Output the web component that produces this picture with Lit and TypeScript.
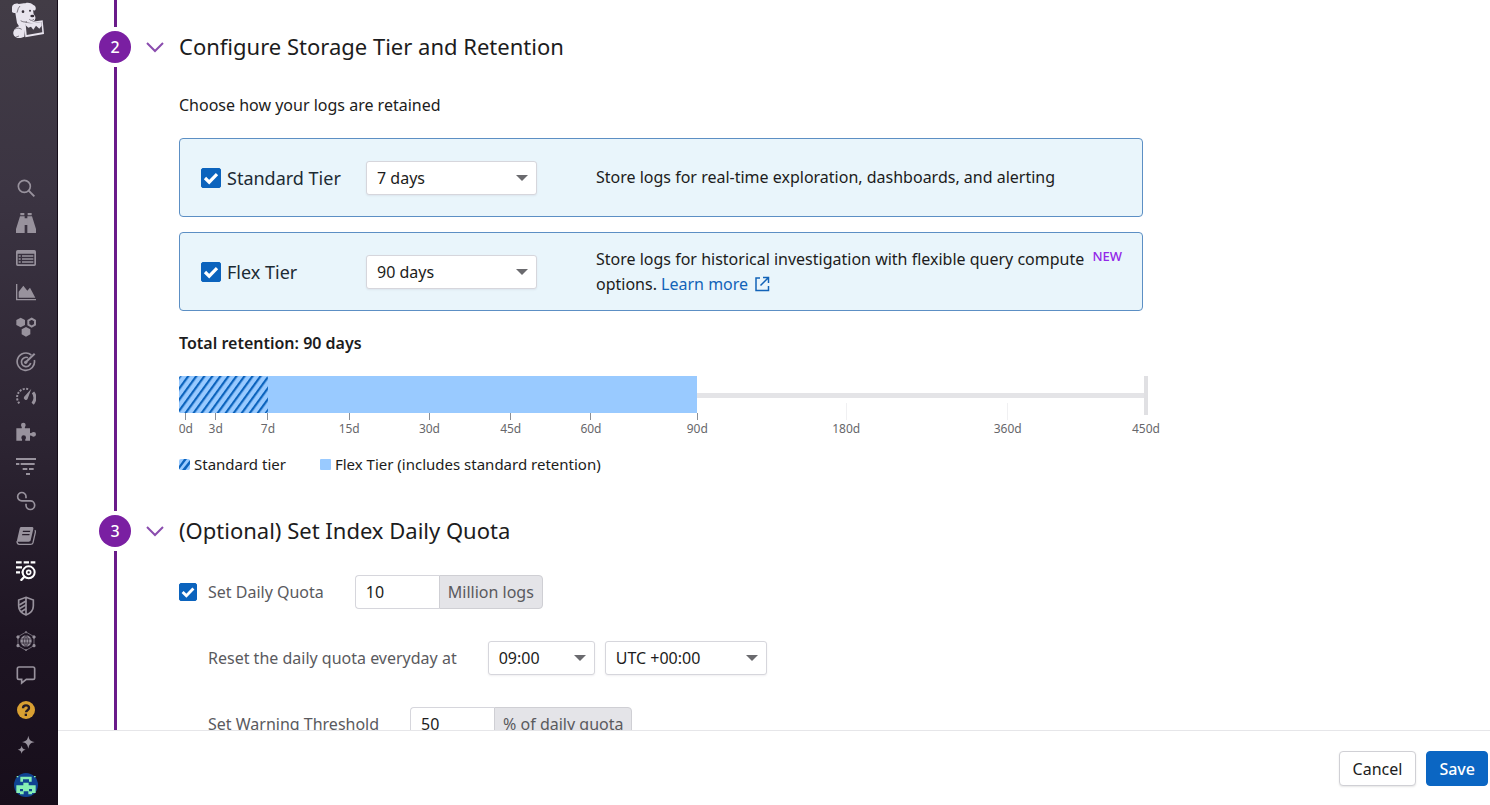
import { LitElement, html, svg, css, TemplateResult, SVGTemplateResult } from "lit";
import { customElement, property } from "lit/decorators.js";

interface NavEntry {
  name: string;
  art: SVGTemplateResult;
  tone?: string;
}

const NAV: NavEntry[] = [
  {
    name: "Search",
    art: svg`<circle cx="25" cy="25" r="18" fill="none" stroke="currentColor" stroke-width="5"/><path d="M38 38 55 55" stroke="currentColor" stroke-width="6"/>`,
  },
  {
    name: "Watchdog",
    art: svg`<path d="M13 0h12v7H13zM35 0h12v7H35zM12 10h14v50H0V48zM34 10h14l12 38v12H34zM26 16h8v20h-8z" fill="currentColor"/>`,
  },
  {
    name: "Events",
    art: svg`<path fill-rule="evenodd" d="M5 6h50a5 5 0 0 1 5 5v38a5 5 0 0 1-5 5H5a5 5 0 0 1-5-5V11a5 5 0 0 1 5-5zM5 17v32h50V17z" fill="currentColor"/><path d="M8 24h6M18 24h34M8 33h6M18 33h34M8 42h6M18 42h34" stroke="currentColor" stroke-width="4"/>`,
  },
  {
    name: "Dashboards",
    art: svg`<path d="M2 6v47h58" fill="none" stroke="currentColor" stroke-width="4"/><path d="M8 47V29l14-18 12 15 8-9 16 30z" fill="currentColor"/>`,
  },
  {
    name: "Infrastructure",
    art: svg`<path d="m14 2 13 7v15l-13 7-13-7V9zM30 30l13 7v15l-13 7-13-7V37z" fill="currentColor"/><path d="m47 5 10 6v12l-10 6-10-6V11z" fill="none" stroke="currentColor" stroke-width="6"/>`,
  },
  {
    name: "Monitors",
    art: svg`<path d="M46 9A26 26 0 1 0 55 24" fill="none" stroke="currentColor" stroke-width="5"/><path d="M36 17A14 14 0 1 0 44 33" fill="none" stroke="currentColor" stroke-width="5"/><path d="M29 31 56 5" stroke="currentColor" stroke-width="6"/><circle cx="29" cy="31" r="5" fill="currentColor"/>`,
  },
  {
    name: "Service level",
    art: svg`<path d="M10 49A26 26 0 0 1 38 7" fill="none" stroke="currentColor" stroke-width="6" stroke-dasharray="6 4"/><path d="M51 16a26 26 0 0 1-1 34" fill="none" stroke="currentColor" stroke-width="9"/><path d="m46 5-11 30a6 6 0 0 1-11-5z" fill="currentColor"/>`,
  },
  {
    name: "Integrations",
    art: svg`<path d="M1 19h16c2-4-2-5-2-10a7 7 0 0 1 14 0c0 5-4 6-2 10h15v14c5 2 5-3 11-3a7 7 0 0 1 0 14c-6 0-6-5-11-3v15H28c-2-5 2-5 2-9a7 7 0 0 0-14 0c0 4 4 4 2 9H1z" fill="currentColor"/>`,
  },
  {
    name: "APM",
    art: svg`<path d="M0 6h60M0 21h10M14 21h42M20 36h14M39 36h14M30 51h12" stroke="currentColor" stroke-width="6"/>`,
  },
  {
    name: "CI",
    art: svg`<path d="M30 22v-5A12.500 12.500 0 1 0 17.500 29.500H43A13 13 0 1 1 30 43v-5" fill="none" stroke="currentColor" stroke-width="5"/>`,
  },
  {
    name: "Notebooks",
    art: svg`<path fill-rule="evenodd" d="M17 3h30c4 0 6 2 5 6l-8 34c-1 3-3 4-6 4H2L11 8c1-4 3-5 6-5zM21 14l-1 4h22l1-4zM19 24l-1 4h22l1-4z" fill="currentColor"/><path d="M3 46c0 7 2 9 7 9h34c4 0 6-2 7-5l7-31c1-3 0-5-2-6" fill="none" stroke="currentColor" stroke-width="4"/>`,
  },
  {
    name: "Logs",
    tone: "current",
    art: svg`<path d="M0 4h17M23 4h16M44 4h14M0 19h18M0 34h12M17 34h4" stroke="currentColor" stroke-width="7"/><circle cx="38" cy="34" r="18" fill="none" stroke="currentColor" stroke-width="6"/><circle cx="38" cy="34" r="6" fill="none" stroke="currentColor" stroke-width="5"/><path d="M25 47 14 59" stroke="currentColor" stroke-width="7"/>`,
  },
  {
    name: "Security",
    art: svg`<path d="M30 4 52 12v18c0 13-9 22-22 27C17 52 8 43 8 30V12zM30 4v53" fill="none" stroke="currentColor" stroke-width="5"/><path d="m10 27 20-12M10 38l20-12M15 47l15-9" stroke="currentColor" stroke-width="5"/>`,
  },
  {
    name: "Synthetics",
    art: svg`<circle cx="30" cy="30" r="17" fill="currentColor"/><path d="M14 24h32M14 36h32M30 13v34M30 13c-11 10-11 24 0 34M30 13c11 10 11 24 0 34" stroke="#221a27" stroke-width="2" fill="none"/><path d="m30 3 24 14v27L30 58 6 44V17z" fill="none" stroke="currentColor" stroke-width="2"/><path d="M30 0v7M30 54v7M3 15h6v6H3zM51 15h6v6h-6zM3 41h6v6H3zM51 41h6v6h-6z" stroke="currentColor" stroke-width="3" fill="currentColor"/>`,
  },
  {
    name: "Feedback",
    art: svg`<path d="M9 6h42a5 5 0 0 1 5 5v27a5 5 0 0 1-5 5H31L17 54V43H9a5 5 0 0 1-5-5V11a5 5 0 0 1 5-5z" fill="none" stroke="currentColor" stroke-width="5"/>`,
  },
  {
    name: "Help",
    tone: "help",
    art: svg`<circle cx="30" cy="30" r="27" fill="currentColor"/><path d="M21 25c0-12 18-11 18-1 0 7-9 6-9 13" fill="none" stroke="#231a25" stroke-width="7"/><path d="M26 41h7v7h-7z" fill="#231a25"/>`,
  },
  {
    name: "AI",
    art: svg`<path d="M37 2c3 13 6 16 19 19-13 3-16 6-19 20-3-14-6-17-19-20 13-3 16-6 19-19zM17 32c2 8 4 10 12 12-8 2-10 4-12 12-2-8-4-10-12-12 8-2 10-4 12-12z" fill="currentColor"/>`,
  },
];

@customElement("side-nav")
export class SideNav extends LitElement {
  static styles = css`
    :host {
      display: flex;
      flex-direction: column;
      box-sizing: border-box;
      flex: none;
      width: 58px;
      padding: 2px 0 8px 12px;
      background: linear-gradient(#423c46 0%, #3b3442 24%, #2c2432 55%, #1d1422 80%, #170e1b 100%);
      border-right: 1px solid #150d19;
    }
    .logo {
      width: 34px;
      height: 38px;
      color: #e8e4ee;
    }
    .logo svg,
    .item svg,
    .avatar svg {
      display: block;
      width: 100%;
      height: 100%;
    }
    .items {
      flex: 1;
      display: flex;
      flex-direction: column;
      justify-content: space-between;
      margin: 138px 0 18px 4px;
    }
    .item {
      width: 20px;
      height: 20px;
      color: #98929d;
    }
    .current {
      color: #fff;
    }
    .help {
      color: #d9a032;
    }
    .avatar {
      width: 24px;
      height: 24px;
      margin-left: 2px;
    }
  `;

  render() {
    return html`
      <a class="logo" href="#" aria-label="Home">
        <svg viewBox="36 6 102 114">
          <path
            fill="currentColor"
            d="M37 17c5-6 13-8 19-5 8 0 14-2 20-2 8-3 17-1 24 5 7 3 9 9 6 15-3 3-5 2-7-1l2 14c4 4 6 8 5 13-2 8-9 10-16 10l-13 1-4 43c-8 3-15 6-23 3-11-5-13-15-7-24 3-5 9-9 14-10l-6-10-5-30c-7 1-11-2-12-8z"
          />
          <path fill="currentColor" d="m72 69 56-8 4 41-56 10z" />
          <path fill="#453f49" d="m77 73 47-7 3 31-47 8z" />
          <path fill="currentColor" d="m77 76 8 7 8-3 7 9 8-12 10 9 7-9-1-11-47 6z" />
          <path d="m51 38 4-13 5-7M62 62c6 4 13 5 19 3M45 87c6-4 14-3 20 1M46 112l11-4M88 58c4 4 9 4 14 0" fill="none" stroke="#453f49" stroke-width="2" />
          <circle cx="69" cy="35" r="4" fill="#352f39" />
          <circle cx="90" cy="32" r="3" fill="#352f39" />
          <ellipse cx="97" cy="48" rx="6" ry="4" fill="#352f39" />
        </svg>
      </a>
      <nav class="items" aria-label="Main">
        ${NAV.map(
          (n) => html`<a class="item ${n.tone ?? ""}" href="#" aria-label=${n.name}><svg viewBox="0 0 60 60">${n.art}</svg></a>`
        )}
      </nav>
      <a class="avatar" href="#" aria-label="Account">
        <svg viewBox="0 0 72 72">
          <circle cx="36" cy="36" r="36" fill="#0f4391" />
          <path
            fill="#86efb4"
            d="M19 11h34v15h-8v-7H27v7h-8zM28 29h16v8h21v23H54V48h-9v7H27v-7h-9v12H7V37h21zM18 55h11v9H18zM43 55h11v9H43z"
          />
          <path fill="#86efb4" d="M8 9h5v4H8zM60 9h5v4h-5z" />
        </svg>
      </a>
    `;
  }
}

@customElement("check-box")
export class CheckBox extends LitElement {
  @property() label = "";
  @property() size: "large" | "small" = "small";

  static styles = css`
    :host {
      display: block;
    }
    .label {
      display: flex;
      align-items: center;
      line-height: 24px;
    }
    .small {
      gap: 11px;
      font-size: 16px;
      color: #5a5a5e;
    }
    .large {
      gap: 6px;
      font-size: 18px;
      color: #1c2b34;
    }
    .box {
      display: grid;
      flex: none;
      width: 18px;
      height: 18px;
    }
    .large .box {
      width: 20px;
      height: 20px;
    }
    .box > * {
      grid-area: 1 / 1;
    }
    .input {
      appearance: none;
      margin: 0;
      border-radius: 2px;
      background: #fff;
      border: 1px solid #b9b9bd;
    }
    .input:checked {
      background: #0b63bd;
      border-color: #0b63bd;
    }
    .mark {
      width: 100%;
      height: 100%;
      pointer-events: none;
    }
  `;

  render() {
    return html`
      <label class="label ${this.size}">
        <span class="box">
          <input class="input" type="checkbox" checked />
          <svg class="mark" viewBox="0 0 20 20"><path d="m4 10 4.200 4.200L16 6.200" fill="none" stroke="#fff" stroke-width="3.200" /></svg>
        </span>
        <span>${this.label}</span>
      </label>
    `;
  }
}

@customElement("drop-down")
export class DropDown extends LitElement {
  @property() value = "";
  @property() name = "";

  static styles = css`
    :host {
      display: grid;
      align-items: center;
      height: 34px;
    }
    .select,
    .arrow {
      grid-area: 1 / 1;
    }
    .select {
      appearance: none;
      box-sizing: border-box;
      width: 100%;
      height: 100%;
      margin: 0;
      padding: 0 28px 0 10px;
      border: 1px solid #d6d6dc;
      border-radius: 3px;
      background: #fff;
      box-shadow: 0 1px 2px rgba(60, 50, 80, 0.08);
      font: inherit;
      font-size: 16px;
      color: #1c1c20;
    }
    .arrow {
      justify-self: end;
      width: 12px;
      height: 6px;
      margin-right: 9px;
      pointer-events: none;
    }
  `;

  render() {
    return html`
      <select class="select" aria-label=${this.name}>
        <option>${this.value}</option>
      </select>
      <svg class="arrow" viewBox="0 0 12 6"><path d="M0 0h12L6 6z" fill="#6a6a6e" /></svg>
    `;
  }
}

interface Tick {
  label: string;
  at: number;
  kind?: "faint" | "edge";
}

/* Positions are percentages along the retention axis. */
const TICKS: Tick[] = [
  { label: "0d", at: 0.7 },
  { label: "3d", at: 3.8 },
  { label: "7d", at: 9.2 },
  { label: "15d", at: 17.6 },
  { label: "30d", at: 25.9 },
  { label: "45d", at: 34.3 },
  { label: "60d", at: 42.6 },
  { label: "90d", at: 53.6 },
  { label: "180d", at: 69, kind: "faint" },
  { label: "360d", at: 85.7, kind: "faint" },
  { label: "450d", at: 100, kind: "edge" },
];

@customElement("retention-chart")
export class RetentionChart extends LitElement {
  static styles = css`
    :host {
      display: block;
    }
    .chart {
      display: block;
      width: 100%;
      height: 64px;
      overflow: visible;
    }
    .crisp {
      shape-rendering: crispEdges;
    }
    .tick {
      stroke: #8b8f96;
    }
    .faint {
      stroke: #f0f0f2;
    }
    .text {
      font-size: 12px;
      fill: #67676b;
      text-anchor: middle;
    }
    .legend {
      display: flex;
      gap: 34px;
      margin: 14px 0 0;
      padding: 0;
      list-style: none;
      font-size: 15px;
      line-height: 20px;
      color: #1c1c20;
    }
    .key {
      display: flex;
      align-items: center;
      gap: 4px;
    }
    .swatch {
      width: 11px;
      height: 11px;
    }
  `;

  private tick(t: Tick) {
    if (t.kind === "edge") return svg`<text class="text" x="${t.at}%" y="57">${t.label}</text>`;
    const x = `${t.at}%`;
    return svg`
      <line class="crisp ${t.kind ?? "tick"}" x1=${x} x2=${x} y1=${t.kind ? 27 : 37} y2="44"/>
      <text class="text" x=${x} y="57">${t.label}</text>`;
  }

  render() {
    return html`
      <svg class="chart" role="img" aria-label="Retention by tier">
        <defs>
          <pattern id="stripes" width="6.500" height="10" patternUnits="userSpaceOnUse" patternTransform="rotate(36)">
            <rect width="6.500" height="10" fill="#99caff" />
            <rect width="2.200" height="10" fill="#0b63bd" />
          </pattern>
        </defs>
        <rect class="crisp" x="53.6%" y="17" width="46.4%" height="5" fill="#e4e4e7" />
        <rect class="crisp" x="99.8%" y="0" width="4" height="39" fill="#e0e0e3" />
        <rect x="0" y="0" width="20%" height="37" rx="3" fill="#99caff" />
        <rect class="crisp" x="9.2%" y="0" width="44.4%" height="37" fill="#99caff" />
        <rect x="0" y="0" width="9.2%" height="37" rx="2" fill="url(#stripes)" />
        ${TICKS.map((t) => this.tick(t))}
      </svg>
      <ul class="legend">
        <li class="key">
          <svg class="swatch" viewBox="0 0 11 11">
            <rect width="11" height="11" rx="2" fill="#99caff" />
            <path d="M0 7 5 0h3L0 10.500zM3 11 11 1v4L6.500 11z" fill="#0b63bd" />
          </svg>
          Standard tier
        </li>
        <li class="key">
          <svg class="swatch" viewBox="0 0 11 11"><rect width="11" height="11" rx="1" fill="#99caff" /></svg>
          Flex Tier (includes standard retention)
        </li>
      </ul>
    `;
  }
}

@customElement("wizard-step")
export class WizardStep extends LitElement {
  @property() number = "";
  @property() heading = "";

  static styles = css`
    :host {
      display: grid;
      grid-template-columns: 32px 18px minmax(0, 1fr);
      column-gap: 15px;
    }
    .rail {
      display: flex;
      flex-direction: column;
      align-items: center;
      gap: 4px;
      padding-bottom: 4px;
    }
    .badge {
      display: grid;
      place-items: center;
      width: 32px;
      height: 32px;
      border-radius: 50%;
      background: #7a1fa2;
      color: #fff;
      font-size: 16px;
      font-weight: 500;
    }
    .line {
      flex: 1;
      width: 3px;
      background: #6a1b8a;
    }
    .toggle {
      display: grid;
      place-items: center;
      height: 32px;
      padding: 0;
      border: 0;
      background: none;
    }
    .chevron {
      width: 18px;
      height: 11px;
    }
    .title {
      margin: 0;
      padding-bottom: 2px;
      font-size: 22px;
      font-weight: 400;
      line-height: 30px;
      color: #1c1c20;
    }
  `;

  render() {
    return html`
      <div class="rail">
        <span class="badge">${this.number}</span>
        <span class="line"></span>
      </div>
      <button class="toggle" type="button" aria-label="Collapse ${this.heading}">
        <svg class="chevron" viewBox="0 0 18 11"><path d="m1 1 8 8 8-8" fill="none" stroke="#8a4cae" stroke-width="2" /></svg>
      </button>
      <div>
        <h2 class="title">${this.heading}</h2>
        <slot></slot>
      </div>
    `;
  }
}

@customElement("app-root")
export class AppRoot extends LitElement {
  static styles = css`
    :host {
      display: flex;
      height: 100vh;
      font-family: "Noto Sans", sans-serif;
      font-size: 16px;
      line-height: 24px;
      color: #1c1c20;
      background: #fff;
    }
    .main {
      flex: 1;
      display: flex;
      flex-direction: column;
      min-width: 0;
    }
    .scroll {
      flex: 1;
      min-height: 0;
      overflow-y: auto;
      scrollbar-width: none;
      padding: 0 41px;
    }
    .lead {
      display: flex;
      justify-content: center;
      width: 32px;
      height: 27px;
      margin-bottom: 4px;
    }
    .lead-line {
      width: 3px;
      background: #6a1b8a;
    }
    .storage {
      max-width: 964px;
      padding-bottom: 41px;
    }
    .intro {
      margin: 30px 0 21px;
    }
    .cards {
      display: grid;
      gap: 15px;
    }
    .card {
      display: grid;
      grid-template-columns: 165px 171px minmax(0, 1fr) auto;
      align-items: center;
      box-sizing: border-box;
      min-height: 79px;
      padding: 13px 20px 13px 21px;
      border: 1px solid #5c8fc4;
      border-radius: 4px;
      background: #e9f5fb;
    }
    .about {
      margin: 0 0 0 59px;
      line-height: 25px;
    }
    .fresh {
      align-self: start;
      font-size: 13px;
      font-weight: 500;
      line-height: 20px;
      color: #9327e8;
    }
    .link {
      color: #1263b8;
      text-decoration: none;
    }
    .out {
      width: 16px;
      height: 16px;
      margin-left: 2px;
      vertical-align: -2px;
    }
    .total {
      margin: 20px 0 21px;
      font-size: 16px;
      font-weight: 600;
    }
    .chart {
      margin-right: -3px;
    }
    .form {
      display: grid;
      gap: 32px;
      padding: 28px 0 40px;
    }
    .row {
      display: flex;
      align-items: center;
      color: #5a5a5e;
    }
    .nested {
      padding-left: 29px;
    }
    .field {
      display: flex;
      height: 34px;
      margin-left: 31px;
    }
    .number {
      box-sizing: border-box;
      width: 84px;
      padding: 0 10px;
      border: 1px solid #d6d6dc;
      border-right-width: 0;
      border-radius: 4px 0 0 4px;
      font: inherit;
      color: #1c1c20;
    }
    .unit {
      padding: 0 8px;
      border: 1px solid #cfcfd4;
      border-radius: 0 4px 4px 0;
      background: #e4e4e8;
      line-height: 32px;
    }
    .time {
      width: 107px;
      margin: 0 10px 0 31px;
    }
    .zone {
      width: 162px;
    }
    .footer {
      display: flex;
      justify-content: flex-end;
      gap: 10px;
      padding: 20px 2px 19px;
      border-top: 1px solid #e6e6e9;
    }
    .button {
      height: 35px;
      padding: 0 13px;
      border: 1px solid #d0d0d5;
      border-radius: 4px;
      background: #fff;
      box-shadow: 0 1px 2px rgba(0, 0, 0, 0.1);
      font: inherit;
      color: #1c1c20;
    }
    .primary {
      padding: 0 12px;
      border-color: #0b66c3;
      background: #0b66c3;
      box-shadow: none;
      font-weight: 500;
      color: #fff;
    }
  `;

  private tier(label: string, value: string, about: TemplateResult) {
    return html`
      <div class="card">
        <check-box size="large" label=${label}></check-box>
        <drop-down value=${value} name="${label} retention"></drop-down>
        ${about}
      </div>
    `;
  }

  private amount(id: string, value: string, unit: string) {
    return html`
      <span class="field">
        <input class="number" id=${id} aria-label=${unit} .value=${value} />
        <span class="unit">${unit}</span>
      </span>
    `;
  }

  render() {
    return html`
      <side-nav></side-nav>
      <main class="main">
        <div class="scroll">
          <div class="lead"><span class="lead-line"></span></div>

          <wizard-step number="2" heading="Configure Storage Tier and Retention">
            <div class="storage">
              <p class="intro">Choose how your logs are retained</p>
              <div class="cards">
                ${this.tier(
                  "Standard Tier",
                  "7 days",
                  html`<p class="about">Store logs for real-time exploration, dashboards, and alerting</p>`
                )}
                ${this.tier(
                  "Flex Tier",
                  "90 days",
                  html`<p class="about">
                      Store logs for historical investigation with flexible query compute options.
                      <a class="link" href="#"
                        >Learn more
                        <svg class="out" viewBox="0 0 16 16">
                          <path d="M6 2H2v12.500h12.500V10M9 1.500h5.500V7M14.500 1.500 6.500 9.500" fill="none" stroke="currentColor" stroke-width="1.500" /></svg
                      ></a>
                    </p>
                    <span class="fresh">NEW</span>`
                )}
              </div>
              <p class="total">Total retention: 90 days</p>
              <retention-chart class="chart"></retention-chart>
            </div>
          </wizard-step>

          <wizard-step number="3" heading="(Optional) Set Index Daily Quota">
            <div class="form">
              <div class="row">
                <check-box label="Set Daily Quota"></check-box>
                ${this.amount("quota", "10", "Million logs")}
              </div>
              <div class="row nested">
                <span>Reset the daily quota everyday at</span>
                <drop-down class="time" value="09:00" name="Reset time"></drop-down>
                <drop-down class="zone" value="UTC +00:00" name="Time zone"></drop-down>
              </div>
              <div class="row nested">
                <label for="threshold">Set Warning Threshold</label>
                ${this.amount("threshold", "50", "% of daily quota")}
              </div>
            </div>
          </wizard-step>
        </div>
        <footer class="footer">
          <button class="button" type="button">Cancel</button>
          <button class="button primary" type="button">Save</button>
        </footer>
      </main>
    `;
  }
}
